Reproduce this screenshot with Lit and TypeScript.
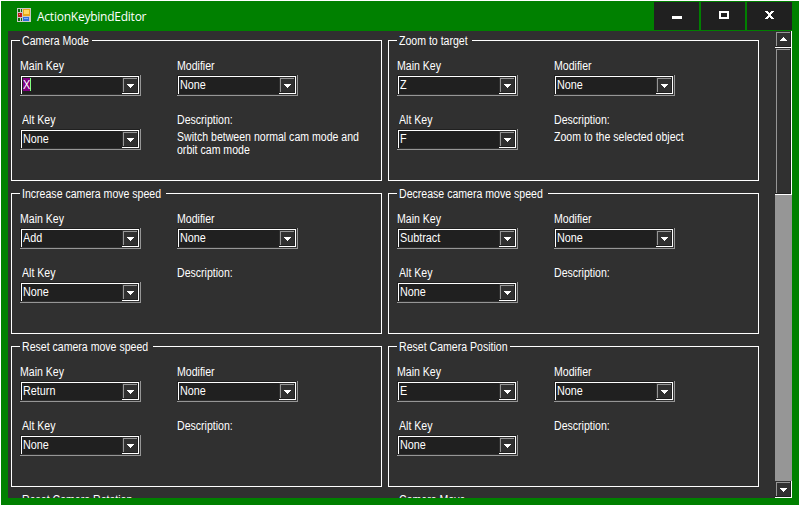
import { LitElement, html, css } from "lit";
import { customElement, property } from "lit/decorators.js";

@customElement("combo-box")
class ComboBox extends LitElement {
  @property() value = "";
  @property({ type: Boolean }) active = false;
  static styles = css`
    :host { display: grid; width: 121px; height: 21px; }
    svg, .text { grid-area: 1 / 1; }
    svg { display: block; }
    .text { margin: 3px 20px 0 3px; height: 14px; line-height: 14px; white-space: pre; overflow: hidden; }
    .run { display: inline-block; transform: scaleX(0.9); transform-origin: 0 50%; }
    .sel { display: flex; width: 7px; height: 13px; background: #800080; border-right: 1px solid #80ff80; }
  `;
  render() {
    const run = html`<span class="run">${this.value}</span>`;
    return html`
      <svg width="121" height="21" shape-rendering="crispEdges">
        <path d="M0 0h121v21H0z" fill="#303030" />
        <path d="M0 0h120v1H1v19H0z" fill="#202020" />
        <path d="M120 0h1v21H0v-1h120z" fill="#969696" />
        <path d="M1 1h117v18H1z" fill="#202020" />
        <path d="M1 1h118v18h-17v-1h16V2H2v17H1z" fill="#fff" />
        <path d="M102 2h16v16h-16z" fill="#303030" />
        <path d="M117 2h1v16h-16v-1h15z" fill="#202020" />
        <path d="M103 3h14v1h-13v13h-1z" fill="#969696" />
        <path d="M107 9h7v1h-1v1h-1v1h-1v1h-1v-1h-1v-1h-1v-1h-1z" fill="#fff" />
      </svg>
      <div class="text">${this.active ? html`<div class="sel">${run}</div>` : run}</div>
    `;
  }
}

interface Action {
  name: string;
  /** Width of the caption, which sets the gap in the frame. */
  w: number;
  main?: string;
  alt?: string;
  desc?: string;
  active?: boolean;
}

const actions: Action[] = [
  { name: "Camera Mode", w: 72, main: "X", alt: "None", desc: "Switch between normal cam mode and\norbit cam mode", active: true },
  { name: "Zoom to target", w: 75, main: "Z", alt: "F", desc: "Zoom to the selected object" },
  { name: "Increase camera move speed", w: 146, main: "Add", alt: "None" },
  { name: "Decrease camera move speed", w: 151, main: "Subtract", alt: "None" },
  { name: "Reset camera move speed", w: 133, main: "Return", alt: "None" },
  { name: "Reset Camera Position", w: 113, main: "E", alt: "None" },
  { name: "Reset Camera Rotation", w: 113 },
  { name: "Camera Move", w: 68 },
];

@customElement("app-root")
class AppRoot extends LitElement {
  static styles = css`
    :host { display: block; box-sizing: border-box; width: 800px; height: 506px; padding: 1px; background: #fff;
      font: 12px/13px "Liberation Sans", sans-serif; color: #fff; overflow: hidden; }
    .window { box-sizing: border-box; width: 798px; height: 504px; background: #008000; padding: 1px 7px 7px; }
    .title { display: flex; height: 29px; }
    .icon { margin: 6px 6px 0 9px; }
    .name { flex: 1; line-height: 29px; font-family: "Open Sans", sans-serif; font-size: 12px; letter-spacing: -0.24px; }
    .controls { display: flex; gap: 2px; height: 28px; }
    .controls svg { background: #202020; }
    .client { display: flex; height: 467px; background: #303030; overflow: hidden; }
    .grid { flex: 1; display: grid; grid-template-columns: 371px 371px; grid-auto-rows: 141px; gap: 12px 6px; padding: 9px 0 0 3px; }
    .group { box-sizing: border-box; border: 1px solid #fff; display: grid; grid-template-columns: 157px 1fr;
      grid-template-rows: 12px 54px 1fr; padding-left: 8px; }
    .legend { box-sizing: border-box; grid-column: 1 / 3; justify-self: start; background: #303030; margin-top: -6px;
      height: 13px; padding-left: 2px; white-space: nowrap; }
    .run { display: inline-block; transform: scaleX(0.88); transform-origin: 0 50%; white-space: pre; }
    .label { margin-top: 7px; height: 15px; }
    .alt { margin-left: 2px; }
    .desc { margin-top: 2px; }
    .scroll { width: 17px; display: flex; flex-direction: column; justify-content: space-between; background: #969696; }
    svg { display: block; }
  `;

  private box(h: number, arrow = "") {
    return html`<svg width="17" height=${h} shape-rendering="crispEdges">
      <rect width="17" height=${h} fill="#fff" />
      <rect width="16" height=${h - 1} fill="#202020" />
      <rect width="15" height=${h - 2} fill="#303030" />
      <rect x="1" y="1" width="14" height="1" fill="#969696" />
      <rect x="1" y="1" width="1" height=${h - 3} fill="#969696" />
      <path d=${arrow} fill="#fff" />
    </svg>`;
  }

  private group(a: Action) {
    return html`<div class="group">
      <div class="legend" style="width:${a.w}px"><span class="run">${a.name}</span></div>
      ${a.main
        ? html`
          <div><div class="label"><span class="run">Main Key</span></div><combo-box .value=${a.main} .active=${!!a.active}></combo-box></div>
          <div><div class="label"><span class="run">Modifier</span></div><combo-box .value=${"None"}></combo-box></div>
          <div><div class="label alt"><span class="run">Alt Key</span></div><combo-box .value=${a.alt ?? ""}></combo-box></div>
          <div><div class="label"><span class="run">Description:</span></div><div class="desc"><span class="run">${a.desc ?? ""}</span></div></div>`
        : ""}
    </div>`;
  }

  render() {
    return html`<div class="window">
      <div class="title">
        <svg class="icon" width="14" height="14" shape-rendering="crispEdges">
          <path d="M0 0h14v14H0z" fill="#c8c8c8" />
          <path d="M1 1h2v3H1zM4 1h1v3H4zM1 10h2v3H1zM4 10h1v3H4z" fill="#0b6b0b" />
          <path d="M1 5h4v4H1z" fill="#c01818" />
          <path d="M2 6h1v1H2z" fill="#f08070" />
          <path d="M6 1h7v7H6z" fill="#e8a818" />
          <path d="M7 2h5v4H7z" fill="#ffd860" />
          <path d="M6 9h6v4H6z" fill="#3070d8" />
          <path d="M7 10h4v1H7z" fill="#80b0f8" />
        </svg>
        <div class="name">ActionKeybindEditor</div>
        <div class="controls">
          <svg width="45" height="28" shape-rendering="crispEdges"><path d="M18 14h10v3H18z" fill="#fff" /></svg>
          <svg width="44" height="28" shape-rendering="crispEdges"><path d="M18 9h10v8H18zM20 11v4h6v-4z" fill="#fff" fill-rule="evenodd" /></svg>
          <svg width="45" height="28" shape-rendering="crispEdges">
            <path d="M18 9h3v1h-3zM24 9h3v1h-3zM19 10h3v1h-3zM23 10h3v1h-3zM20 11h5v1h-5zM21 12h3v2h-3zM20 14h5v1h-5zM19 15h3v1h-3zM23 15h3v1h-3zM18 16h3v1h-3zM24 16h3v1h-3z" fill="#fff" />
          </svg>
        </div>
      </div>
      <div class="client">
        <div class="grid">${actions.map((a) => this.group(a))}</div>
        <div class="scroll">
          <div>
            ${this.box(17, "M8 6h1v1h1v1h1v1h1v1H5V9h1V8h1V7h1z")}
            ${this.box(147)}
          </div>
          ${this.box(17, "M5 7h7v1h-1v1h-1v1H9v1H8v-1H7V9H6V8H5z")}
        </div>
      </div>
    </div>`;
  }
}
